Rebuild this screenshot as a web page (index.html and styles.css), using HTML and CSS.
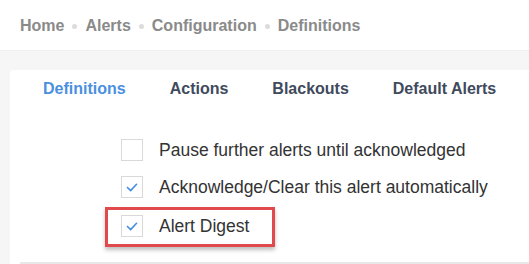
FILE: index.html
```html
<!DOCTYPE html>
<html lang="en">
<head>
  <meta charset="UTF-8" />
  <title>Alert Definitions</title>
  <link rel="stylesheet" href="styles.css">
</head>
<body>
  <div class="topbar">
    <nav class="crumbs">
      <span>Home</span><i class="dot"></i>
      <span>Alerts</span><i class="dot"></i>
      <span>Configuration</span><i class="dot"></i>
      <span>Definitions</span>
    </nav>
  </div>
  <div class="page">
    <div class="card">
      <div class="tabs">
        <span class="tab active">Definitions</span>
        <span class="tab">Actions</span>
        <span class="tab">Blackouts</span>
        <span class="tab">Default Alerts</span>
      </div>
      <div class="options">
        <label class="option">
          <span class="box"></span>
          Pause further alerts until acknowledged
        </label>
        <label class="option">
          <span class="box checked">
            <svg viewBox="0 0 22 22"><path d="M6 11.5l3.5 3.5 6.5-7"/></svg>
          </span>
          Acknowledge/Clear this alert automatically
        </label>
        <label class="option highlight">
          <span class="box checked">
            <svg viewBox="0 0 22 22"><path d="M6 11.5l3.5 3.5 6.5-7"/></svg>
          </span>
          Alert Digest
        </label>
      </div>
      <div class="rule"></div>
    </div>
  </div>
</body>
</html>
```

FILE: styles.css
```css
body {
  margin: 0;
  font-family: "Liberation Sans", Arial, sans-serif;
  background: #f6f6f6;
  overflow: hidden;
}
.topbar {
  background: #ffffff;
  height: 50px;
  padding-left: 20px;
  border-bottom: 1px solid #f0f0f0;
}
.crumbs {
  display: flex;
  align-items: center;
  height: 50px;
  font-size: 16px;
  font-weight: bold;
  color: #8a8a8a;
  padding-top: 2px;
  box-sizing: border-box;
}
.dot {
  width: 5px;
  height: 5px;
  border-radius: 50%;
  background: #dcdcdc;
  margin: 0 8px;
}
.page {
  padding: 19px 0 0 10px;
}
.card {
  background: #ffffff;
  border-radius: 4px 0 0 0;
  height: 200px;
  padding-left: 10px;
}
.tabs {
  display: flex;
  gap: 44px;
  padding: 10px 0 0 23px;
  font-size: 16px;
  font-weight: bold;
  color: #3f4a5c;
}
.tab.active {
  color: #4a8fe0;
}
.options {
  display: flex;
  flex-direction: column;
  gap: 15px;
  padding: 41px 0 0 101px;
}
.option {
  display: flex;
  align-items: center;
  gap: 16px;
  font-size: 17.5px;
  color: #333333;
  height: 22px;
}
.box {
  width: 20px;
  height: 20px;
  border: 1px solid #d9d9d9;
  flex-shrink: 0;
}
.box svg {
  width: 20px;
  height: 20px;
  display: block;
}
.box svg path {
  fill: none;
  stroke: #4a8fe0;
  stroke-width: 1.8;
  stroke-linecap: round;
  stroke-linejoin: round;
}
.highlight {
  position: relative;
  margin-top: 2px;
}
.highlight::after {
  content: "";
  position: absolute;
  left: -16px;
  top: -8px;
  width: 164px;
  height: 34px;
  border: 3px solid #e04a4c;
  box-shadow: 0 3px 4px rgba(0, 0, 0, 0.25);
}
.rule {
  margin-top: 25px;
  height: 2px;
  background: #e8e8e8;
}
```
